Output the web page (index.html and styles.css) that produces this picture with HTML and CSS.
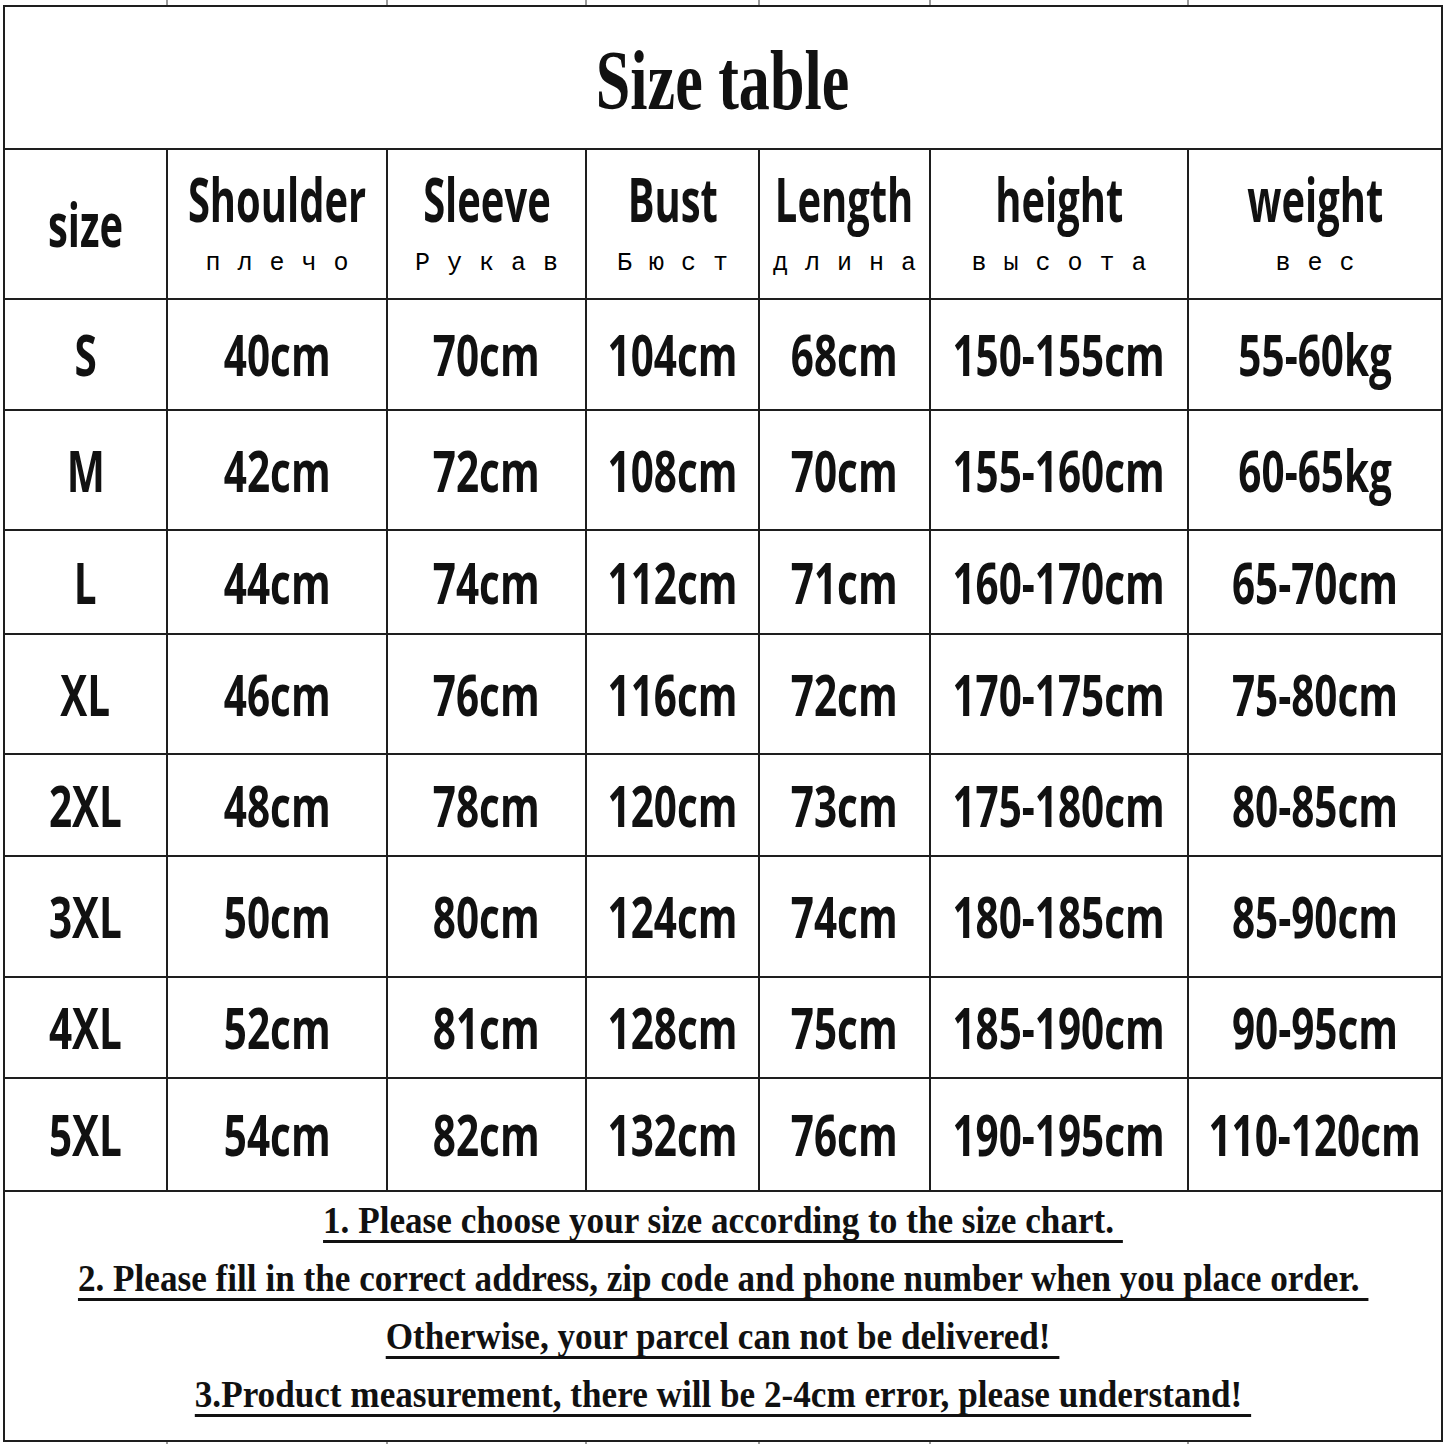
FILE: index.html
```html
<!DOCTYPE html>
<html lang="en">
<head>
<meta charset="utf-8">
<title>Size table</title>
<link rel="stylesheet" href="styles.css">
</head>
<body>
<div class="page">
  <div class="stubs stubs-top">
    <span></span><span></span><span></span><span></span><span></span><span></span><span></span>
  </div>
  <div class="chart">
    <div class="cell title"><span class="sq title-text">Size table</span></div>

    <div class="cell head head-size"><span class="sq en">size</span></div>
    <div class="cell head"><span class="sq en">Shoulder</span><span class="ru">плечо</span></div>
    <div class="cell head"><span class="sq en">Sleeve</span><span class="ru">Рукав</span></div>
    <div class="cell head"><span class="sq en">Bust</span><span class="ru">Бюст</span></div>
    <div class="cell head"><span class="sq en">Length</span><span class="ru">длина</span></div>
    <div class="cell head"><span class="sq en">height</span><span class="ru">высота</span></div>
    <div class="cell head"><span class="sq en">weight</span><span class="ru">вес</span></div>

    <div class="cell"><span class="sq v">S</span></div>
    <div class="cell"><span class="sq v">40cm</span></div>
    <div class="cell"><span class="sq v">70cm</span></div>
    <div class="cell"><span class="sq v">104cm</span></div>
    <div class="cell"><span class="sq v">68cm</span></div>
    <div class="cell"><span class="sq v">150-155cm</span></div>
    <div class="cell"><span class="sq v">55-60kg</span></div>

    <div class="cell"><span class="sq v">M</span></div>
    <div class="cell"><span class="sq v">42cm</span></div>
    <div class="cell"><span class="sq v">72cm</span></div>
    <div class="cell"><span class="sq v">108cm</span></div>
    <div class="cell"><span class="sq v">70cm</span></div>
    <div class="cell"><span class="sq v">155-160cm</span></div>
    <div class="cell"><span class="sq v">60-65kg</span></div>

    <div class="cell"><span class="sq v">L</span></div>
    <div class="cell"><span class="sq v">44cm</span></div>
    <div class="cell"><span class="sq v">74cm</span></div>
    <div class="cell"><span class="sq v">112cm</span></div>
    <div class="cell"><span class="sq v">71cm</span></div>
    <div class="cell"><span class="sq v">160-170cm</span></div>
    <div class="cell"><span class="sq v">65-70cm</span></div>

    <div class="cell"><span class="sq v">XL</span></div>
    <div class="cell"><span class="sq v">46cm</span></div>
    <div class="cell"><span class="sq v">76cm</span></div>
    <div class="cell"><span class="sq v">116cm</span></div>
    <div class="cell"><span class="sq v">72cm</span></div>
    <div class="cell"><span class="sq v">170-175cm</span></div>
    <div class="cell"><span class="sq v">75-80cm</span></div>

    <div class="cell"><span class="sq v">2XL</span></div>
    <div class="cell"><span class="sq v">48cm</span></div>
    <div class="cell"><span class="sq v">78cm</span></div>
    <div class="cell"><span class="sq v">120cm</span></div>
    <div class="cell"><span class="sq v">73cm</span></div>
    <div class="cell"><span class="sq v">175-180cm</span></div>
    <div class="cell"><span class="sq v">80-85cm</span></div>

    <div class="cell"><span class="sq v">3XL</span></div>
    <div class="cell"><span class="sq v">50cm</span></div>
    <div class="cell"><span class="sq v">80cm</span></div>
    <div class="cell"><span class="sq v">124cm</span></div>
    <div class="cell"><span class="sq v">74cm</span></div>
    <div class="cell"><span class="sq v">180-185cm</span></div>
    <div class="cell"><span class="sq v">85-90cm</span></div>

    <div class="cell"><span class="sq v">4XL</span></div>
    <div class="cell"><span class="sq v">52cm</span></div>
    <div class="cell"><span class="sq v">81cm</span></div>
    <div class="cell"><span class="sq v">128cm</span></div>
    <div class="cell"><span class="sq v">75cm</span></div>
    <div class="cell"><span class="sq v">185-190cm</span></div>
    <div class="cell"><span class="sq v">90-95cm</span></div>

    <div class="cell"><span class="sq v">5XL</span></div>
    <div class="cell"><span class="sq v">54cm</span></div>
    <div class="cell"><span class="sq v">82cm</span></div>
    <div class="cell"><span class="sq v">132cm</span></div>
    <div class="cell"><span class="sq v">76cm</span></div>
    <div class="cell"><span class="sq v">190-195cm</span></div>
    <div class="cell"><span class="sq v">110-120cm</span></div>

    <div class="cell notes">
      <span class="sq note">1. Please choose your size according to the size chart.&nbsp;</span>
      <span class="sq note">2. Please fill in the correct address, zip code and phone number when you place order.&nbsp;</span>
      <span class="sq note">Otherwise, your parcel can not be delivered!&nbsp;</span>
      <span class="sq note">3.Product measurement, there will be 2-4cm error, please understand!&nbsp;</span>
    </div>
  </div>
  <div class="stubs stubs-bottom">
    <span></span><span></span><span></span><span></span><span></span><span></span><span></span>
  </div>
</div>
</body>
</html>
```

FILE: styles.css
```css
html, body {
  margin: 0;
  padding: 0;
  background: #ffffff;
}

.page {
  width: 1445px;
  height: 1445px;
  overflow: hidden;
  background: #ffffff;
  color: #111111;
}

.stubs {
  display: grid;
  grid-template-columns: 161px 218px 197px 171px 169px 256px 252px;
  column-gap: 2px;
  width: 1436px;
  margin-left: 3px;
  background: #9a9a9a;
  border-left: 2px solid #ffffff;
  border-right: 2px solid #ffffff;
}

.stubs span {
  background: #ffffff;
}

.stubs-top {
  height: 5px;
}

.stubs-bottom {
  height: 2px;
}

.chart {
  display: grid;
  grid-template-columns: 161px 218px 197px 171px 169px 256px 252px;
  grid-template-rows: 141px 148px 109px 118px 102px 118px 100px 119px 99px 111px 248px;
  gap: 2px;
  padding: 2px;
  width: 1436px;
  margin-left: 3px;
  background: #1e1e1e;
}

.cell {
  background: #ffffff;
  display: flex;
  align-items: center;
  justify-content: center;
  white-space: nowrap;
  min-width: 0;
}

.sq {
  display: inline-block;
  transform-origin: center center;
  white-space: nowrap;
  flex: none;
}

.title {
  grid-column: 1 / -1;
  padding-top: 5px;
}

.title-text {
  font-family: "Liberation Serif", "Times New Roman", serif;
  font-weight: 700;
  font-size: 85px;
  line-height: 1;
  transform: scaleX(0.73);
}

.head {
  flex-direction: column;
  justify-content: flex-start;
  padding-top: 19px;
}

.head-size {
  justify-content: center;
  padding-top: 0;
}

.en {
  font-family: "Open Sans", "DejaVu Sans", sans-serif;
  font-weight: 700;
  font-size: 60px;
  line-height: 1;
  transform: scaleX(0.665);
}

.ru {
  margin-top: 22px;
  font-family: "Liberation Mono", "Courier New", monospace;
  font-size: 25px;
  line-height: 1;
  letter-spacing: 17px;
  margin-right: -17px;
  color: #000000;
}

.v {
  font-family: "Open Sans", "DejaVu Sans", sans-serif;
  font-weight: 700;
  font-size: 57px;
  line-height: 1;
  transform: scaleX(0.71);
}

.notes {
  grid-column: 1 / -1;
  flex-direction: column;
  justify-content: flex-start;
  padding-top: 0;
}

.note {
  font-family: "Liberation Serif", "Times New Roman", serif;
  font-weight: 700;
  font-size: 37px;
  line-height: 58px;
  text-decoration: underline;
  text-decoration-thickness: 3px;
  text-underline-offset: 7px;
  text-decoration-skip-ink: none;
  transform: scaleX(0.95);
}
```
